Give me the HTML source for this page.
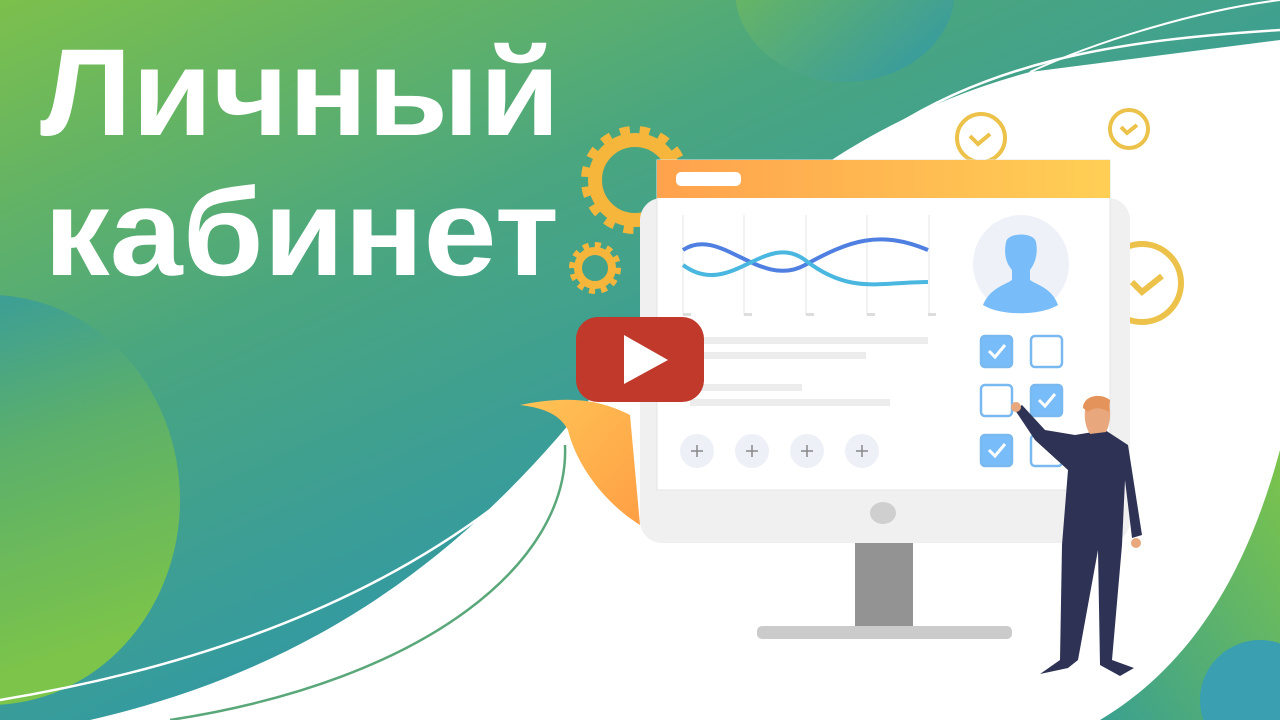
<!DOCTYPE html>
<html><head><meta charset="utf-8"><style>
html,body{margin:0;padding:0;width:1280px;height:720px;overflow:hidden;background:#fff}
svg{display:block}
</style></head><body>
<svg width="1280" height="720" viewBox="0 0 1280 720" xmlns="http://www.w3.org/2000/svg">
<defs>
<linearGradient id="bg" x1="0" y1="0" x2="0.8" y2="1">
<stop offset="0" stop-color="#7cc04c"/><stop offset="0.35" stop-color="#4aa67f"/><stop offset="0.75" stop-color="#2f97a8"/><stop offset="1" stop-color="#2590b8"/>
</linearGradient>
<linearGradient id="blob" x1="0" y1="0" x2="0.3" y2="1">
<stop offset="0" stop-color="#2f97a8"/><stop offset="0.5" stop-color="#5cb06a"/><stop offset="1" stop-color="#7cc44a"/>
</linearGradient>
<linearGradient id="topblob" x1="0" y1="0" x2="1" y2="1">
<stop offset="0" stop-color="#7cc04c"/><stop offset="1" stop-color="#2f97a8"/>
</linearGradient>
<linearGradient id="br" x1="1" y1="0" x2="0" y2="1">
<stop offset="0" stop-color="#7cc44a"/><stop offset="1" stop-color="#3aa090"/>
</linearGradient>
<linearGradient id="bar" x1="0" y1="0" x2="1" y2="0">
<stop offset="0" stop-color="#ffa24d"/><stop offset="1" stop-color="#ffcf55"/>
</linearGradient>
<linearGradient id="leaf" x1="0" y1="0" x2="1" y2="1">
<stop offset="0" stop-color="#ffc455"/><stop offset="1" stop-color="#ff9f45"/>
</linearGradient>
</defs>
<rect width="1280" height="720" fill="url(#bg)"/>
<ellipse cx="-10" cy="500" rx="190" ry="205" fill="url(#blob)"/>
<ellipse cx="845" cy="-10" rx="110" ry="92" fill="url(#topblob)"/>
<!-- white region -->
<path d="M1280,40 L1030,72 C850,120 720,230 620,360 C500,520 350,660 90,720 L1280,720 Z" fill="#fff"/>
<path d="M1280,30 C1120,40 980,60 860,150 C760,230 680,330 590,420 C480,540 300,650 0,700" fill="none" stroke="#fff" stroke-width="2.5"/>
<path d="M1280,0 C1200,10 1100,40 1030,72" fill="none" stroke="#fff" stroke-width="2"/>
<path d="M465,445 C470,560 330,680 70,720" fill="none" stroke="#5aa87a" stroke-width="2.5" transform="translate(100,0)"/>
<path d="M1280,450 C1250,560 1200,660 1100,720 L1280,720 Z" fill="url(#br)"/>
<circle cx="1260" cy="700" r="60" fill="#3a9fb0"/>
<!-- text -->
<text x="40" y="135" font-family="Liberation Sans, DejaVu Sans, sans-serif" font-weight="bold" font-size="124" fill="#fff" textLength="520" lengthAdjust="spacingAndGlyphs">Личный</text>
<text x="44" y="275" font-family="Liberation Sans, DejaVu Sans, sans-serif" font-weight="bold" font-size="124" fill="#fff" textLength="515" lengthAdjust="spacingAndGlyphs">кабинет</text>
<!-- gears -->
<g fill="none" stroke="#f6b63c">
<circle cx="635" cy="180" r="40" stroke-width="14"/>
<circle cx="635" cy="180" r="50" stroke-width="8" stroke-dasharray="10 10"/>
<circle cx="595" cy="268" r="17" stroke-width="8"/>
<circle cx="595" cy="268" r="23" stroke-width="6" stroke-dasharray="6 6"/>
</g>
<!-- clocks -->
<g fill="none" stroke="#ecc24a" stroke-width="4">
<circle cx="981" cy="138" r="24"/><path d="M970,136 l8,8 l12,-10"/>
<circle cx="1129" cy="129" r="19"/><path d="M1121,127 l6,6 l10,-8"/>
<circle cx="1142" cy="283" r="39" stroke-width="6"/><path d="M1132,282 l10,10 l20,-16" stroke-width="6"/>
</g>
<!-- leaf -->
<path d="M520,405 C570,395 600,400 630,415 L640,525 C600,500 575,460 568,430 C560,415 545,408 520,405Z" fill="url(#leaf)"/>
<!-- monitor -->
<rect x="640" y="198" width="490" height="345" rx="22" fill="#f0f0f0"/>
<rect x="855" y="543" width="58" height="85" fill="#939393"/>
<rect x="757" y="626" width="255" height="13" rx="5" fill="#cbcbcb"/>
<ellipse cx="883" cy="513" rx="13" ry="11" fill="#cfcfcf"/>
<rect x="657" y="160" width="453" height="330" fill="#fff" stroke="#e4e4e4"/>
<rect x="657" y="160" width="453" height="38" fill="url(#bar)"/>
<rect x="676" y="172" width="65" height="14" rx="5" fill="#fff"/>
<!-- chart -->
<g stroke="#eee" stroke-width="1.5">
<line x1="683" y1="215" x2="683" y2="315"/><line x1="744" y1="215" x2="744" y2="315"/><line x1="806" y1="215" x2="806" y2="315"/><line x1="867" y1="215" x2="867" y2="315"/><line x1="929" y1="215" x2="929" y2="315"/>
</g>
<path d="M683,250 C720,225 760,290 805,265 C850,240 880,230 928,250" fill="none" stroke="#4f7fe0" stroke-width="4"/>
<path d="M683,265 C730,300 765,230 805,260 C850,295 880,282 928,282" fill="none" stroke="#4ab7e0" stroke-width="4"/>
<g fill="#ddd"><rect x="683" y="313" width="8" height="3"/><rect x="744" y="313" width="8" height="3"/><rect x="806" y="313" width="8" height="3"/><rect x="867" y="313" width="8" height="3"/><rect x="928" y="313" width="8" height="3"/></g>
<g fill="#ececec"><rect x="690" y="337" width="238" height="7"/><rect x="690" y="352" width="176" height="7"/><rect x="690" y="384" width="112" height="7"/><rect x="690" y="399" width="200" height="7"/></g>
<g fill="#eef0f7"><circle cx="697" cy="451" r="17"/><circle cx="752" cy="451" r="17"/><circle cx="807" cy="451" r="17"/><circle cx="862" cy="451" r="17"/></g>
<g stroke="#888" stroke-width="1.5"><path d="M691,451h12M697,445v12M746,451h12M752,445v12M801,451h12M807,445v12M856,451h12M862,445v12"/></g>
<!-- avatar -->
<ellipse cx="1021" cy="264" rx="48" ry="49" fill="#eef1f8"/>
<path d="M983,305 C990,288 1005,285 1012,280 L1012,270 C1005,262 1004,252 1006,242 C1008,232 1034,232 1036,242 C1038,252 1036,262 1030,270 L1030,280 C1037,285 1052,288 1058,305 C1040,316 1000,316 983,305Z" fill="#78bdf9"/>
<!-- checkboxes -->
<g stroke="#7ab9ef" stroke-width="2.5" fill="#fff">
<rect x="981" y="336" width="31" height="31" rx="4" fill="#78bdf9"/><rect x="1031" y="336" width="31" height="31" rx="4"/>
<rect x="981" y="385" width="31" height="31" rx="4"/><rect x="1031" y="385" width="31" height="31" rx="4" fill="#78bdf9"/>
<rect x="981" y="435" width="31" height="31" rx="4" fill="#78bdf9"/><rect x="1031" y="435" width="31" height="31" rx="4"/>
</g>
<g stroke="#fff" stroke-width="3" fill="none"><path d="M989,351 l6,6 l10,-12M1039,400 l6,6 l10,-12M989,450 l6,6 l10,-12"/></g>
<!-- play button -->
<rect x="576" y="317" width="128" height="85" rx="22" fill="#c0392b"/>
<path d="M624,335 L668,360 L624,384Z" fill="#fff"/>
<!-- man -->
<path d="M1075,435 L1105,430 L1128,445 L1142,535 L1132,538 L1125,480 L1122,545 L1112,660 L1134,668 L1120,676 L1100,665 L1098,550 L1078,660 L1068,668 L1040,674 L1060,660 L1062,545 L1068,470 L1035,440 L1015,410 L1022,405 L1045,430Z" fill="#2e3355"/>
<path d="M1085,410 C1085,400 1100,397 1108,402 C1112,410 1110,425 1106,432 L1090,434 C1086,428 1084,420 1085,410Z" fill="#e8a77c"/>
<path d="M1083,408 C1083,396 1100,392 1110,400 L1109,412 C1100,406 1092,408 1088,412Z" fill="#e4935a"/>
<circle cx="1016" cy="407" r="5" fill="#e8a77c"/>
<circle cx="1136" cy="543" r="5" fill="#e8a77c"/>
</svg>
</body></html>
